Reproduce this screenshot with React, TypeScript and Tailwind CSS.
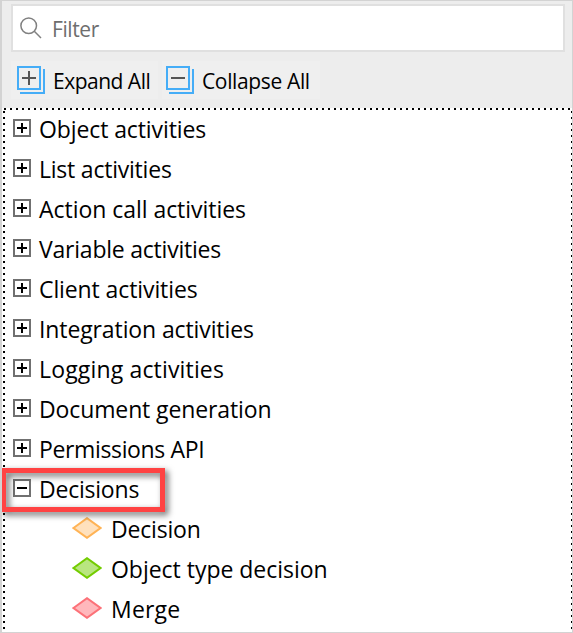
const groups = [
  { label: "Object activities", style: "tracking-[-0.1px]" },
  { label: "List activities", style: "tracking-[-0.22px]" },
  { label: "Action call activities", style: "tracking-[-0.04px]" },
  { label: "Variable activities", style: "tracking-[-0.22px]" },
  { label: "Client activities", style: "tracking-[-0.1px]" },
  { label: "Integration activities", style: "tracking-[-0.11px]" },
  { label: "Logging activities", style: "tracking-[0.16px]" },
  { label: "Document generation", style: "tracking-[-0.12px]" },
  { label: "Permissions API", style: "tracking-[-0.36px]" },
];

const decisions = [
  { label: "Decision", fill: "#ffe1bd", stroke: "#ffb355", style: "tracking-[-0.18px]" },
  { label: "Object type decision", fill: "#b9e680", stroke: "#73cc00", style: "tracking-[-0.02px]" },
  { label: "Merge", fill: "#ffb8bc", stroke: "#fc7178", style: "tracking-[0.2px]" },
];

function Toggle({ open = false }: { open?: boolean }) {
  return (
    <svg className="mt-[9px] shrink-0" width="18" height="18" viewBox="0 0 18 18" shapeRendering="crispEdges">
      <rect x="1" y="1" width="16" height="16" fill="#fff" stroke="#707070" strokeWidth="2" />
      <path d={open ? "M4 9H14" : "M4 9H14M9 4V14"} stroke="#000" strokeWidth="2" />
    </svg>
  );
}

function StackIcon({ plus = false }: { plus?: boolean }) {
  return (
    <svg className="mt-[5px] shrink-0" width="28" height="28" viewBox="0 0 28 28" fill="none" shapeRendering="crispEdges">
      <path d="M1 1H23V23H1ZM27 3V27H3" stroke="#45adf7" strokeWidth="2" />
      <path d={plus ? "M5 12H19M12 5V19" : "M5 12H19"} stroke="#555" strokeWidth="2" />
    </svg>
  );
}

export default function App() {
  return (
    <div className="flex h-[633px] w-[573px] flex-col overflow-hidden border-t border-r border-b border-l-2 border-[#d3d3d3] bg-[#ededed] font-['Open_Sans','Noto_Sans',sans-serif] text-black">
      <div className="mt-[3px] mr-[7px] ml-[9px] flex h-12 shrink-0 border-2 border-[#e0e0e0] bg-white">
        <svg className="mt-[11px] ml-[7px] shrink-0" width="22" height="22" viewBox="0 0 22 22" fill="none" stroke="#808080" strokeWidth="1.5">
          <circle cx="8.7" cy="8.7" r="7.8" />
          <path d="M14.3 14.3L21 21" />
        </svg>
        <span className="mt-[7px] ml-[10px] text-[21px] leading-8 tracking-[-0.4px] text-[#6e6e6e]">Filter</span>
      </div>
      <div className="mt-[9px] ml-[9px] flex h-[38px] shrink-0 gap-1">
        <div className="flex w-[147px] bg-[#efefef] pl-[6px]">
          <StackIcon plus />
          <span className="mt-1 ml-2 whitespace-nowrap text-[21px] leading-8 tracking-[-0.5px]">Expand All</span>
        </div>
        <div className="flex w-[158px] bg-[#efefef] pl-1">
          <StackIcon />
          <span className="mt-1 ml-2 whitespace-nowrap text-[21px] leading-8 tracking-[-0.36px]">Collapse All</span>
        </div>
      </div>
      <div className="mt-[9px] flex min-h-0 flex-1 flex-col bg-white">
        <div className="ml-[2px] h-[2px] w-[568px] shrink-0 bg-[repeating-linear-gradient(to_right,#000_0_2px,transparent_2px_6px)]" />
        <div className="flex min-h-0 flex-1">
          <div className="mt-px ml-px w-[2px] bg-[repeating-linear-gradient(to_bottom,#000_0_2px,transparent_2px_6px)]" />
          <div className="relative flex-1 pl-2">
            {groups.map((g) => (
              <div key={g.label} className="flex h-10 gap-2">
                <Toggle />
                <span className={`whitespace-nowrap text-[23px] leading-[38px] ${g.style}`}>{g.label}</span>
              </div>
            ))}
            <div className="flex h-10 gap-2">
              <Toggle open />
              <span className="whitespace-nowrap text-[23px] leading-[38px] tracking-[-0.22px]">Decisions</span>
            </div>
            {decisions.map((d) => (
              <div key={d.label} className="flex h-10 pl-[59px]">
                <svg className="mt-[7px] shrink-0" width="30" height="22" viewBox="0 0 30 22">
                  <path d="M1.5 11L15 1.2L28.5 11L15 20.8Z" fill={d.fill} stroke={d.stroke} strokeWidth="2" />
                </svg>
                <span className={`ml-[9px] whitespace-nowrap text-[23px] leading-[38px] ${d.style}`}>{d.label}</span>
              </div>
            ))}
            <div className="absolute top-[358px] left-[-4px] h-11 w-[164px] border-[5px] border-[#ff4343] drop-shadow-[3px_3px_3px_rgba(0,0,0,0.6)]" />
          </div>
          <div className="mt-px w-px bg-[repeating-linear-gradient(to_bottom,#000_0_2px,transparent_2px_6px)]" />
        </div>
      </div>
    </div>
  );
}
